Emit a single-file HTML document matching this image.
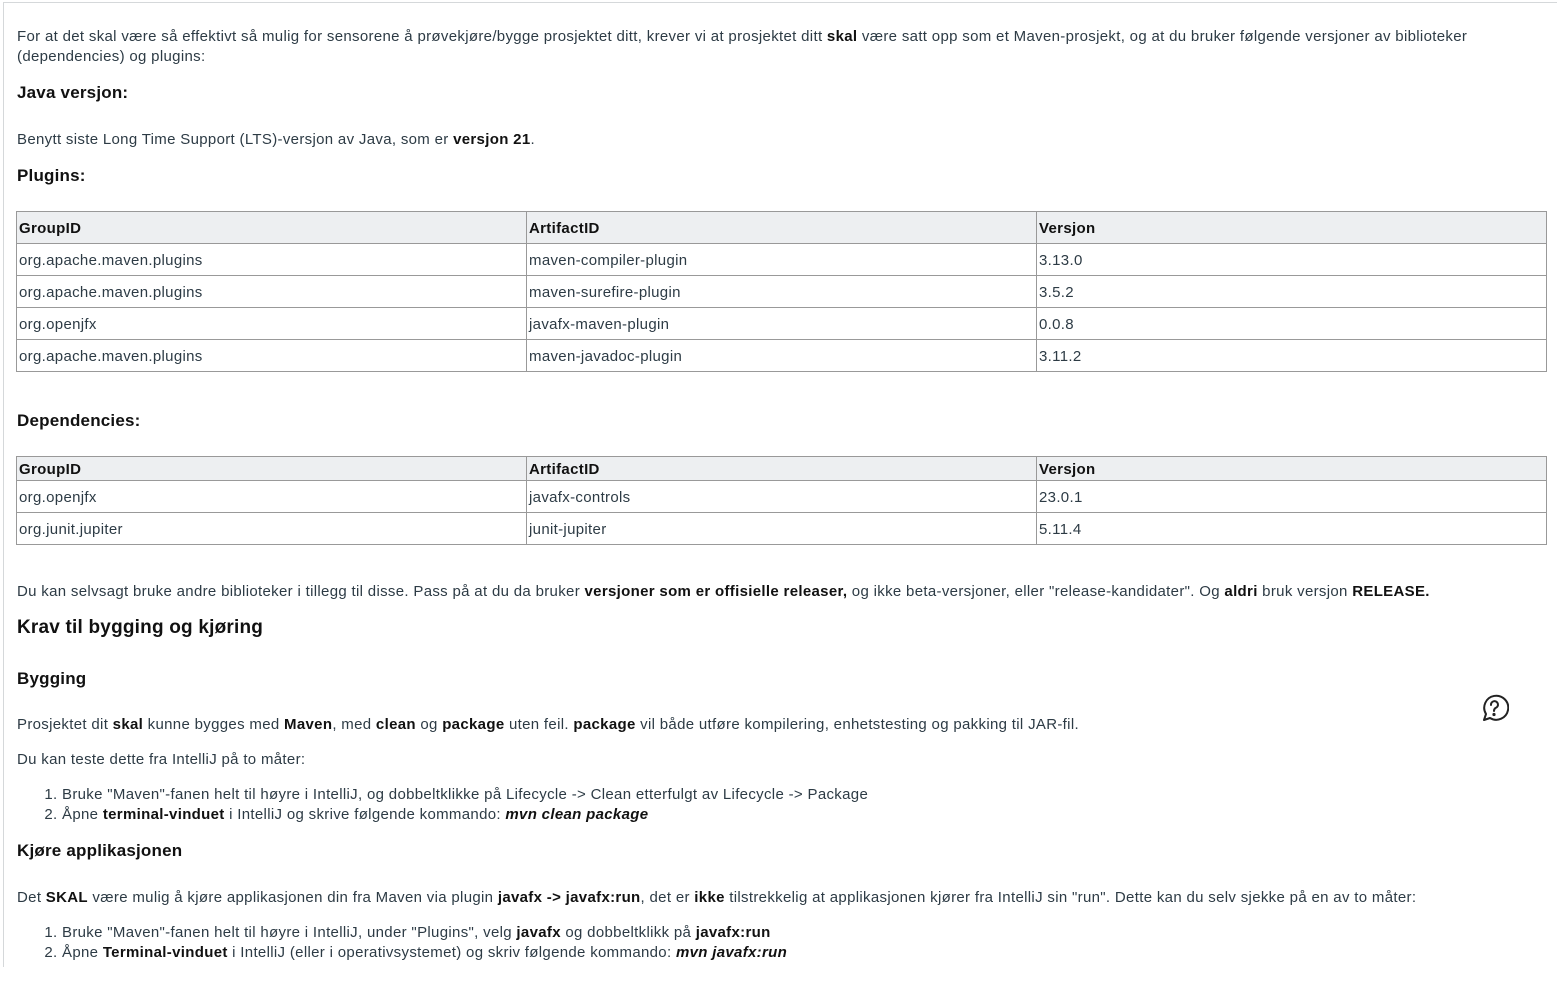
<!DOCTYPE html>
<html><head><meta charset="utf-8"><style>
html,body{margin:0;padding:0;background:#fff;width:1557px;height:982px;overflow:hidden}
body{font-family:"Liberation Sans",sans-serif;color:#2d3b45;font-size:15px;position:relative;letter-spacing:0.32px}
.frame{position:absolute;left:3px;top:2px;width:1560px;height:964px;border-left:1px solid #d5d8da;border-top:1px solid #d5d8da}
.a{position:absolute;left:17px;white-space:nowrap;line-height:20px}
.h{font-weight:bold;font-size:17px;color:#111;letter-spacing:0.2px}
b{color:#111}
table{position:absolute;left:16px;width:1531px;border-collapse:collapse;font-size:15px}
td,th{border:1px solid #999;text-align:left;padding:2px 2px 0;font-weight:normal;width:33.33%}
th{background:#edeff1;font-weight:bold;color:#111}
.t1 th,.t1 td{height:29px}
.t2 th{height:21px}.t2 td{height:29px}
ol{margin:0;padding-left:62px}
</style></head><body>
<div class="frame"></div>
<div class="a" style="top:27px">For at det skal være så effektivt så mulig for sensorene å prøvekjøre/bygge prosjektet ditt, krever vi at prosjektet ditt <b>skal</b> være satt opp som et Maven-prosjekt, og at du bruker følgende versjoner av biblioteker<br>(dependencies) og plugins:</div>
<div class="a h" style="top:83px">Java versjon:</div>
<div class="a" style="top:130px">Benytt siste Long Time Support (LTS)-versjon av Java, som er <b>versjon 21</b>.</div>
<div class="a h" style="top:166px">Plugins:</div>
<table class="t1" style="top:211px">
<tr><th>GroupID</th><th>ArtifactID</th><th>Versjon</th></tr>
<tr><td>org.apache.maven.plugins</td><td>maven-compiler-plugin</td><td>3.13.0</td></tr>
<tr><td>org.apache.maven.plugins</td><td>maven-surefire-plugin</td><td>3.5.2</td></tr>
<tr><td>org.openjfx</td><td>javafx-maven-plugin</td><td>0.0.8</td></tr>
<tr><td>org.apache.maven.plugins</td><td>maven-javadoc-plugin</td><td>3.11.2</td></tr>
</table>
<div class="a h" style="top:411px">Dependencies:</div>
<table class="t2" style="top:456px">
<tr><th>GroupID</th><th>ArtifactID</th><th>Versjon</th></tr>
<tr><td>org.openjfx</td><td>javafx-controls</td><td>23.0.1</td></tr>
<tr><td>org.junit.jupiter</td><td>junit-jupiter</td><td>5.11.4</td></tr>
</table>
<div class="a" style="top:582px">Du kan selvsagt bruke andre biblioteker i tillegg til disse. Pass på at du da bruker <b>versjoner som er offisielle releaser,</b> og ikke beta-versjoner, eller "release-kandidater". Og <b>aldri</b> bruk versjon <b>RELEASE.</b></div>
<div class="a h" style="top:617px;font-size:19px;line-height:22px">Krav til bygging og kjøring</div>
<div class="a h" style="top:669px">Bygging</div>
<div class="a" style="top:715px">Prosjektet dit <b>skal</b> kunne bygges med <b>Maven</b>, med <b>clean</b> og <b>package</b> uten feil. <b>package</b> vil både utføre kompilering, enhetstesting og pakking til JAR-fil.</div>
<div class="a" style="top:750px">Du kan teste dette fra IntelliJ på to måter:</div>
<div class="a" style="top:785px;left:0"><ol><li>Bruke "Maven"-fanen helt til høyre i IntelliJ, og dobbeltklikke på Lifecycle -&gt; Clean etterfulgt av Lifecycle -&gt; Package</li><li>Åpne <b>terminal-vinduet</b> i IntelliJ og skrive følgende kommando: <b><i>mvn clean package</i></b></li></ol></div>
<div class="a h" style="top:841px">Kjøre applikasjonen</div>
<div class="a" style="top:888px">Det <b>SKAL</b> være mulig å kjøre applikasjonen din fra Maven via plugin <b>javafx -&gt; javafx:run</b>, det er <b>ikke</b> tilstrekkelig at applikasjonen kjører fra IntelliJ sin "run". Dette kan du selv sjekke på en av to måter:</div>
<div class="a" style="top:923px;left:0"><ol><li>Bruke "Maven"-fanen helt til høyre i IntelliJ, under "Plugins", velg <b>javafx</b> og dobbeltklikk på <b>javafx:run</b></li><li>Åpne <b>Terminal-vinduet</b> i IntelliJ (eller i operativsystemet) og skriv følgende kommando: <b><i>mvn javafx:run</i></b></li></ol></div>
<svg style="position:absolute;left:1480px;top:694px" width="29" height="29" viewBox="0 0 29 29" fill="none" stroke="#222" stroke-width="2">
<path d="M4 26 L6 20 A12 12 0 1 1 10 24 Z" stroke-linejoin="round"/>
<path d="M11 11 A3.5 3.5 0 1 1 15.5 14 Q14 15 14 17" stroke-linecap="round"/>
<circle cx="14" cy="20.5" r="0.6" fill="#222"/>
</svg>
</body></html>
